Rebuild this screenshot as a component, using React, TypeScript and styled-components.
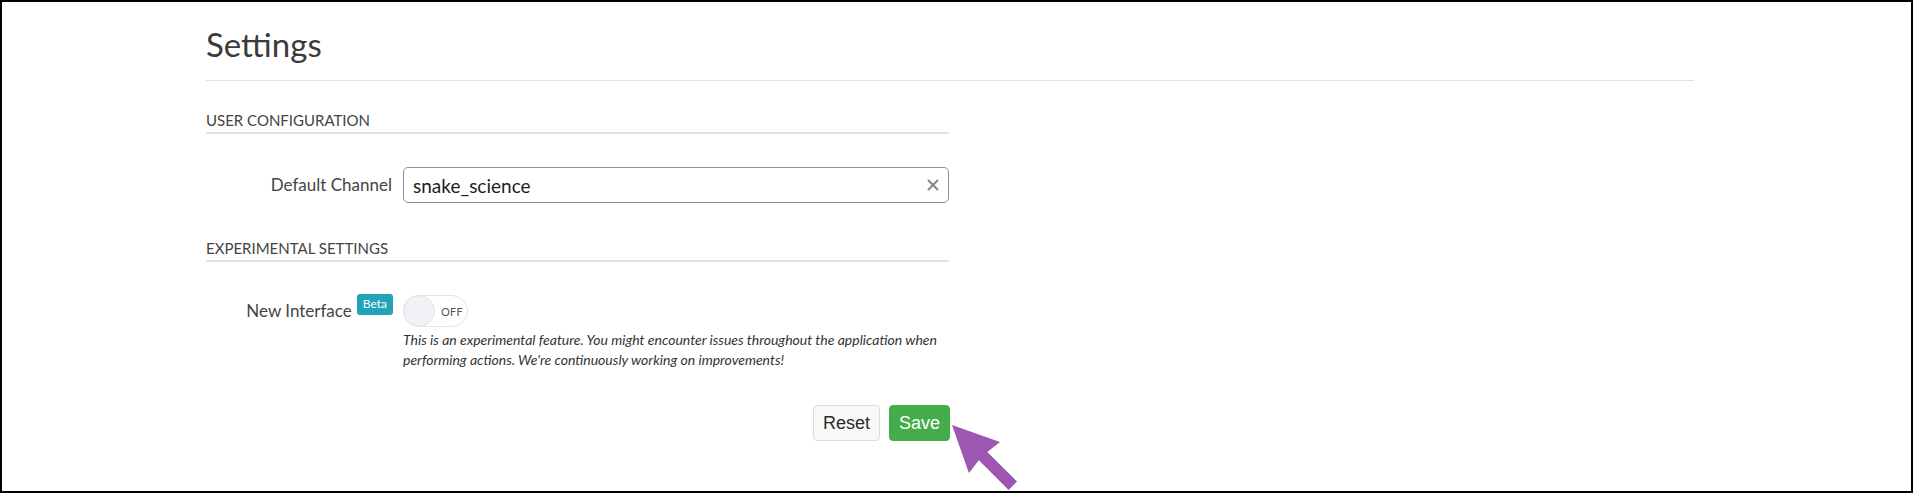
import { createGlobalStyle, styled } from "styled-components";

const GlobalStyle = createGlobalStyle`
  html, body {
    margin: 0;
    padding: 0;
    background: #fff;
  }
  * {
    box-sizing: border-box;
  }
`;

const Frame = styled.div`
  position: relative;
  width: 1913px;
  height: 493px;
  border: 2px solid #000;
  background: #fff;
  overflow: hidden;
  font-family: Lato, "Open Sans", sans-serif;
`;

const Container = styled.div`
  width: 1488px;
  margin-left: 204px;
  padding-top: 22px;
`;

const PageTitle = styled.h1`
  margin: 0;
  font-size: 33px;
  line-height: 40px;
  font-weight: 400;
  color: #3b3b3b;
  padding-bottom: 16px;
  border-bottom: 1px solid #e1e3e8;
`;

const Form = styled.form`
  width: 743px;
`;

const SectionTitle = styled.h2<{ $first?: boolean }>`
  margin: ${(p) => (p.$first ? "29px" : "35px")} 0 0;
  font-size: 15px;
  line-height: 20px;
  font-weight: 400;
  text-transform: uppercase;
  color: #444;
  padding-bottom: 2px;
  border-bottom: 2px solid #dee1e6;
`;

const FieldRow = styled.div`
  display: grid;
  grid-template-columns: 186px 1fr;
  column-gap: 11px;
  margin-top: 33px;
`;

const Label = styled.label<{ $height: number }>`
  display: flex;
  justify-content: flex-end;
  align-items: flex-start;
  font-size: 17px;
  line-height: ${(p) => p.$height}px;
  color: #444;
  white-space: nowrap;
`;

const Badge = styled.span`
  display: inline-block;
  margin-left: 5px;
  margin-top: -1px;
  margin-right: -1px;
  height: 21px;
  padding: 0 6px;
  border-radius: 3px;
  background: #22a3b7;
  color: #fff;
  font-size: 12px;
  line-height: 19px;
`;

const InputWrap = styled.div`
  display: flex;
  align-items: center;
  height: 36px;
  border: 1px solid #8c91a2;
  border-radius: 5px;
  padding: 0 9px;
`;

const TextInput = styled.input`
  flex: 1;
  border: none;
  outline: none;
  padding: 0;
  font-family: Lato, "Open Sans", sans-serif;
  font-size: 19px;
  color: #1b1e23;
  background: transparent;
`;

const ClearButton = styled.button`
  display: flex;
  align-items: center;
  justify-content: center;
  width: 16px;
  height: 16px;
  padding: 0;
  margin-right: -2px;
  border: none;
  background: none;
  color: #85888f;
  cursor: pointer;
`;

const Toggle = styled.div`
  width: 65px;
  height: 32px;
  border: 1px solid #e3e5e9;
  border-radius: 16px;
  background: #fff;
  display: flex;
  align-items: center;
`;

const Knob = styled.span`
  width: 32px;
  height: 32px;
  margin: -1px 0 0 -1px;
  border-radius: 50%;
  background: #f1f2f5;
  border: 1px solid #e0e2e7;
`;

const ToggleText = styled.span`
  margin-left: 6px;
  font-size: 11px;
  color: #555;
  letter-spacing: 0.2px;
`;

const Help = styled.p`
  margin: 3px 0 0;
  font-size: 14px;
  line-height: 20px;
  font-style: italic;
  color: #333;
`;

const Actions = styled.div`
  display: flex;
  justify-content: flex-end;
  gap: 9px;
  margin-top: 35px;
  margin-right: -1px;
`;

const Button = styled.button<{ $primary?: boolean }>`
  height: 36px;
  padding: 0 9px;
  border-radius: 4px;
  border: 1px solid ${(p) => (p.$primary ? "#43ad4b" : "#dcdcdc")};
  background: ${(p) => (p.$primary ? "#43ad4b" : "#f8f8f8")};
  color: ${(p) => (p.$primary ? "#fff" : "#2b2b2b")};
  font-family: "Liberation Sans", Arial, sans-serif;
  font-size: 18px;
  cursor: pointer;
`;

const Pointer = styled.svg`
  position: absolute;
  left: 938px;
  top: 413px;
  pointer-events: none;
`;

const App = (): React.ReactElement => {
  return (
    <Frame>
      <GlobalStyle />
      <Container>
        <PageTitle>Settings</PageTitle>

        <Form onSubmit={(e) => e.preventDefault()}>
          <SectionTitle $first>User Configuration</SectionTitle>
          <FieldRow>
            <Label $height={36}>Default Channel</Label>
            <InputWrap>
              <TextInput defaultValue="snake_science" />
              <ClearButton type="button" aria-label="Clear">
                <svg width="12" height="12" viewBox="0 0 12 12">
                  <path
                    d="M1.5 1.5 L10.5 10.5 M10.5 1.5 L1.5 10.5"
                    stroke="currentColor"
                    strokeWidth="2"
                    strokeLinecap="round"
                  />
                </svg>
              </ClearButton>
            </InputWrap>
          </FieldRow>

          <SectionTitle>Experimental Settings</SectionTitle>
          <FieldRow>
            <Label $height={32}>
              New Interface<Badge>Beta</Badge>
            </Label>
            <div>
              <Toggle>
                <Knob />
                <ToggleText>OFF</ToggleText>
              </Toggle>
              <Help>
                This is an experimental feature. You might encounter issues
                throughout the application when performing actions. We're
                continuously working on improvements!
              </Help>
            </div>
          </FieldRow>

          <Actions>
            <Button type="button">Reset</Button>
            <Button type="submit" $primary>
              Save
            </Button>
          </Actions>
        </Form>
      </Container>

      {/* annotation arrow pointing at the Save button */}
      <Pointer width="90" height="80" viewBox="938 413 90 80">
        <polygon
          points="950,423 998,440 985.3,449.9 1015,479.6 1006.6,488 976.9,458.3 966.9,471.1"
          fill="#9d57b2"
        />
      </Pointer>
    </Frame>
  );
};

export default App;
